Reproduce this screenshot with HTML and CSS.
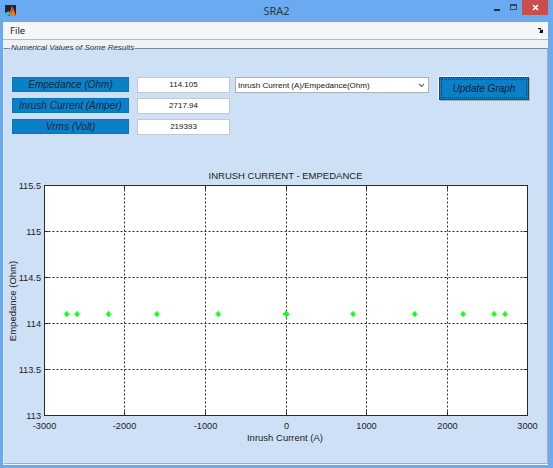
FILE: index.html
```html
<!DOCTYPE html>
<html>
<head>
<meta charset="utf-8">
<title>SRA2</title>
<link rel="stylesheet" href="styles.css">
</head>
<body>
<div class="window">
  <header class="titlebar">
    <div class="tb-left">
      <svg class="app-icon" width="11" height="11" viewBox="0 0 11 11">
        <rect width="11" height="11" fill="#1c2733"/>
        <polygon points="4,10 7,1 9,5 11,11 5,11" fill="#f07b1c"/>
        <polygon points="7,1 8,5 6,9" fill="#c83c12"/>
        <polygon points="0,8 4,6 5,9 3,11 0,11" fill="#3fb6da"/>
      </svg>
    </div>
    <div class="tb-title">SRA2</div>
    <div class="tb-right">
      <span class="btn-min"></span>
      <span class="btn-max"></span>
      <span class="btn-close">
        <svg width="7" height="7" viewBox="0 0 7 7"><path d="M1 1L6 6M6 1L1 6" stroke="#fff" stroke-width="1.6"/></svg>
      </span>
    </div>
  </header>
  <div class="client">
    <nav class="menubar">
      <span class="menu-item">File</span>
      <svg class="dock" width="5" height="5" viewBox="0 0 5 5"><path d="M0 0.5H3M0.5 0L4.5 4M4.5 1.5V4.5H1.5" stroke="#111" stroke-width="1" fill="none"/><rect x="2" y="2" width="3" height="3" fill="#111"/></svg>
    </nav>
    <main class="figure">
      <section class="panel">
        <div class="panel-title">Numerical Values of Some Results</div>
        <div class="controls">
          <div class="lbl r1">Empedance (Ohm)</div>
          <div class="val r1">114.105</div>
          <div class="select">
            <span class="select-text">Inrush Current (A)/Empedance(Ohm)</span>
            <svg class="chev" width="7" height="5" viewBox="0 0 7 5"><path d="M1 1L3.5 3.5L6 1" stroke="#6a6f76" stroke-width="1.2" fill="none"/></svg>
          </div>
          <div class="update">Update Graph</div>
          <div class="lbl r2">Inrush Current (Amper)</div>
          <div class="val r2">2717.94</div>
          <div class="lbl r3">Vrms (Volt)</div>
          <div class="val r3">219393</div>
        </div>
        <svg class="chart" width="543" height="303" viewBox="0 0 543 303">
          <defs>
            <path id="mk" d="M-3 0H3M0 -3V3M-1.5 -1.5L1.5 1.5M-1.5 1.5L1.5 -1.5"/>
          </defs>
          <text class="ttl" x="281.5" y="19" text-anchor="middle">INRUSH CURRENT - EMPEDANCE</text>
          <rect x="40.5" y="25.5" width="483" height="230" fill="#fff"/>
          <g class="grid">
            <line x1="120.5" y1="25.5" x2="120.5" y2="255.5"/>
            <line x1="201.5" y1="25.5" x2="201.5" y2="255.5"/>
            <line x1="282.5" y1="25.5" x2="282.5" y2="255.5"/>
            <line x1="362.5" y1="25.5" x2="362.5" y2="255.5"/>
            <line x1="443.5" y1="25.5" x2="443.5" y2="255.5"/>
            <line x1="40.5" y1="71.5" x2="523.5" y2="71.5"/>
            <line x1="40.5" y1="117.5" x2="523.5" y2="117.5"/>
            <line x1="40.5" y1="163.5" x2="523.5" y2="163.5"/>
            <line x1="40.5" y1="209.5" x2="523.5" y2="209.5"/>
          </g>
          <g class="ticks">
            <path d="M40.5 71.5h4M40.5 117.5h4M40.5 163.5h4M40.5 209.5h4"/>
            <path d="M523.5 71.5h-4M523.5 117.5h-4M523.5 163.5h-4M523.5 209.5h-4"/>
            <path d="M120.5 255.5v-4M201.5 255.5v-4M282.5 255.5v-4M362.5 255.5v-4M443.5 255.5v-4"/>
            <path d="M120.5 25.5v4M201.5 25.5v4M282.5 25.5v4M362.5 25.5v4M443.5 25.5v4"/>
          </g>
          <rect class="box" x="40.5" y="25.5" width="483" height="230"/>
          <g class="ylab" text-anchor="end">
            <text x="37" y="28.5">115.5</text>
            <text x="37" y="74.7">115</text>
            <text x="37" y="121">114.5</text>
            <text x="37" y="167">114</text>
            <text x="37" y="213.3">113.5</text>
            <text x="37" y="258.8">113</text>
          </g>
          <g class="xlab" text-anchor="middle">
            <text x="40.5" y="269">-3000</text>
            <text x="120.5" y="269">-2000</text>
            <text x="201.5" y="269">-1000</text>
            <text x="282.5" y="269">0</text>
            <text x="362.5" y="269">1000</text>
            <text x="443.5" y="269">2000</text>
            <text x="523.5" y="269">3000</text>
          </g>
          <text class="axlab" x="281" y="280.5" text-anchor="middle">Inrush Current (A)</text>
          <text class="axlab" transform="translate(11.5 141) rotate(-90)" text-anchor="middle">Empedance (Ohm)</text>
          <g class="markers">
            <use href="#mk" x="62.75" y="154"/>
            <use href="#mk" x="73.07" y="154"/>
            <use href="#mk" x="104.5" y="154"/>
            <use href="#mk" x="152.9" y="154"/>
            <use href="#mk" x="214.2" y="154"/>
            <use href="#mk" x="282" y="154" class="bold"/>
            <use href="#mk" x="282.6" y="154"/>
            <use href="#mk" x="349" y="154"/>
            <use href="#mk" x="410.7" y="154"/>
            <use href="#mk" x="459.1" y="154"/>
            <use href="#mk" x="490.1" y="154"/>
            <use href="#mk" x="501.1" y="154"/>
          </g>
        </svg>
      </section>
    </main>
  </div>
</div>
</body>
</html>
```

FILE: styles.css
```css
* { box-sizing: border-box; margin: 0; padding: 0; }

html, body { width: 553px; height: 468px; overflow: hidden; }

body {
  background: #69aaf0;
  font-family: "Liberation Sans Narrow", "Arial Narrow", "Liberation Sans", Arial, sans-serif;
  color: #1b2530;
}

.window { display: flex; flex-direction: column; height: 468px; }

/* title bar */
.titlebar {
  height: 22px;
  flex: none;
  display: grid;
  grid-template-columns: 1fr auto 1fr;
  align-items: start;
}
.app-icon { display: block; margin: 5px 0 0 5px; }
.tb-title {
  font: 11px/22px "Noto Sans", "Open Sans", sans-serif;
  color: #2e3640;
}
.tb-right {
  display: flex;
  justify-content: flex-end;
  align-items: flex-start;
  padding-right: 5px;
}
.btn-min { width: 6px; height: 2px; background: #26303b; margin-top: 9px; }
.btn-max {
  width: 7px; height: 6px;
  border: 1px solid #3a4a5c; border-top-width: 2px;
  margin: 4px 0 0 10px;
}
.btn-close {
  width: 26px; height: 15px;
  background: #c94f4f;
  margin-left: 5px;
  display: flex; align-items: center; justify-content: center;
}
.btn-close svg { display: block; }

/* client area */
.client {
  margin: 0 5px 0 3px;
  height: 443px;
  display: flex;
  flex-direction: column;
  background: #eff1f4;
}
.menubar {
  height: 18px;
  flex: none;
  background: #f5f6f7;
  border-bottom: 1px solid #b6bbc2;
  display: flex;
  align-items: center;
  justify-content: space-between;
  padding: 0 5px 0 7px;
}
.menu-item { font: 9.5px/17px "Noto Sans", "Open Sans", sans-serif; color: #1e1e1e; }
.dock { display: block; }

.figure {
  flex: 1;
  padding: 8px 0 1px;
  display: flex;
  flex-direction: column;
}

.panel {
  flex: 1;
  background: #cee0f6;
  border: 1px solid #a3afbc;
  border-top-color: #7c8690;
  border-left-color: #e1ecf9;
  display: flex;
  flex-direction: column;
}
.panel-title {
  align-self: flex-start;
  margin: -6px 0 0 6px;
  padding: 0 1px;
  height: 10px;
  font-size: 8px;
  line-height: 10px;
  font-style: italic;
  color: #2b3540;
  background: linear-gradient(#eff1f4 50%, #cee0f6 50%);
}

/* controls */
.controls {
  margin-top: 24px;
  padding-left: 8px;
  display: grid;
  grid-template-columns: 117px 8px 93px 5px 194px 10px 90px;
  grid-template-rows: repeat(3, 16px);
  row-gap: 5px;
}
.r1 { grid-row: 1; }
.r2 { grid-row: 2; }
.r3 { grid-row: 3; }

.lbl {
  grid-column: 1;
  height: 15px;
  background: #0a80c6;
  border: 1px solid #0a76b8;
  font-size: 10px;
  line-height: 13px;
  font-style: italic;
  text-align: center;
  color: #13283d;
  white-space: nowrap;
}
.val {
  grid-column: 3;
  height: 16px;
  background: #fff;
  border: 1px solid #c3c8ce;
  font-size: 8px;
  line-height: 14px;
  text-align: center;
  color: #151515;
}
.select {
  grid-column: 5;
  grid-row: 1;
  height: 16px;
  background: #fff;
  border: 1px solid #adb2b8;
  display: flex;
  align-items: center;
  padding: 0 3px 0 2px;
  font-size: 8px;
  color: #151515;
}
.select-text { flex: 1; white-space: nowrap; }
.chev { display: block; }

.update {
  grid-column: 7;
  grid-row: 1 / 3;
  align-self: start;
  height: 23px;
  background: #0a80c6;
  border: 1px solid #3a4048;
  box-shadow: -1px -1px 0 #f4f7fa, 1px 1px 0 #a9b4c0;
  outline: 1px dotted #12283f;
  outline-offset: -3px;
  font-size: 10px;
  line-height: 21px;
  font-style: italic;
  text-align: center;
  color: #0d1f33;
}

/* chart */
.chart { display: block; margin-top: 25px; }
.chart text {
  font-family: "Liberation Sans Narrow", "Arial Narrow", "Liberation Sans", Arial, sans-serif;
  font-size: 9.2px;
  fill: #222;
}
.chart .ttl, .chart .axlab { font-size: 9.5px; }
.grid line { stroke: #2a2a2a; stroke-width: 1; stroke-dasharray: 2 2; }
.ticks path { stroke: #2a2a2a; stroke-width: 1; fill: none; }
.box { fill: none; stroke: #2a2a2a; stroke-width: 1; }
.markers use { stroke: #11ff11; stroke-width: 1.2; fill: none; }
.markers use.bold { stroke-width: 1.7; }
```
